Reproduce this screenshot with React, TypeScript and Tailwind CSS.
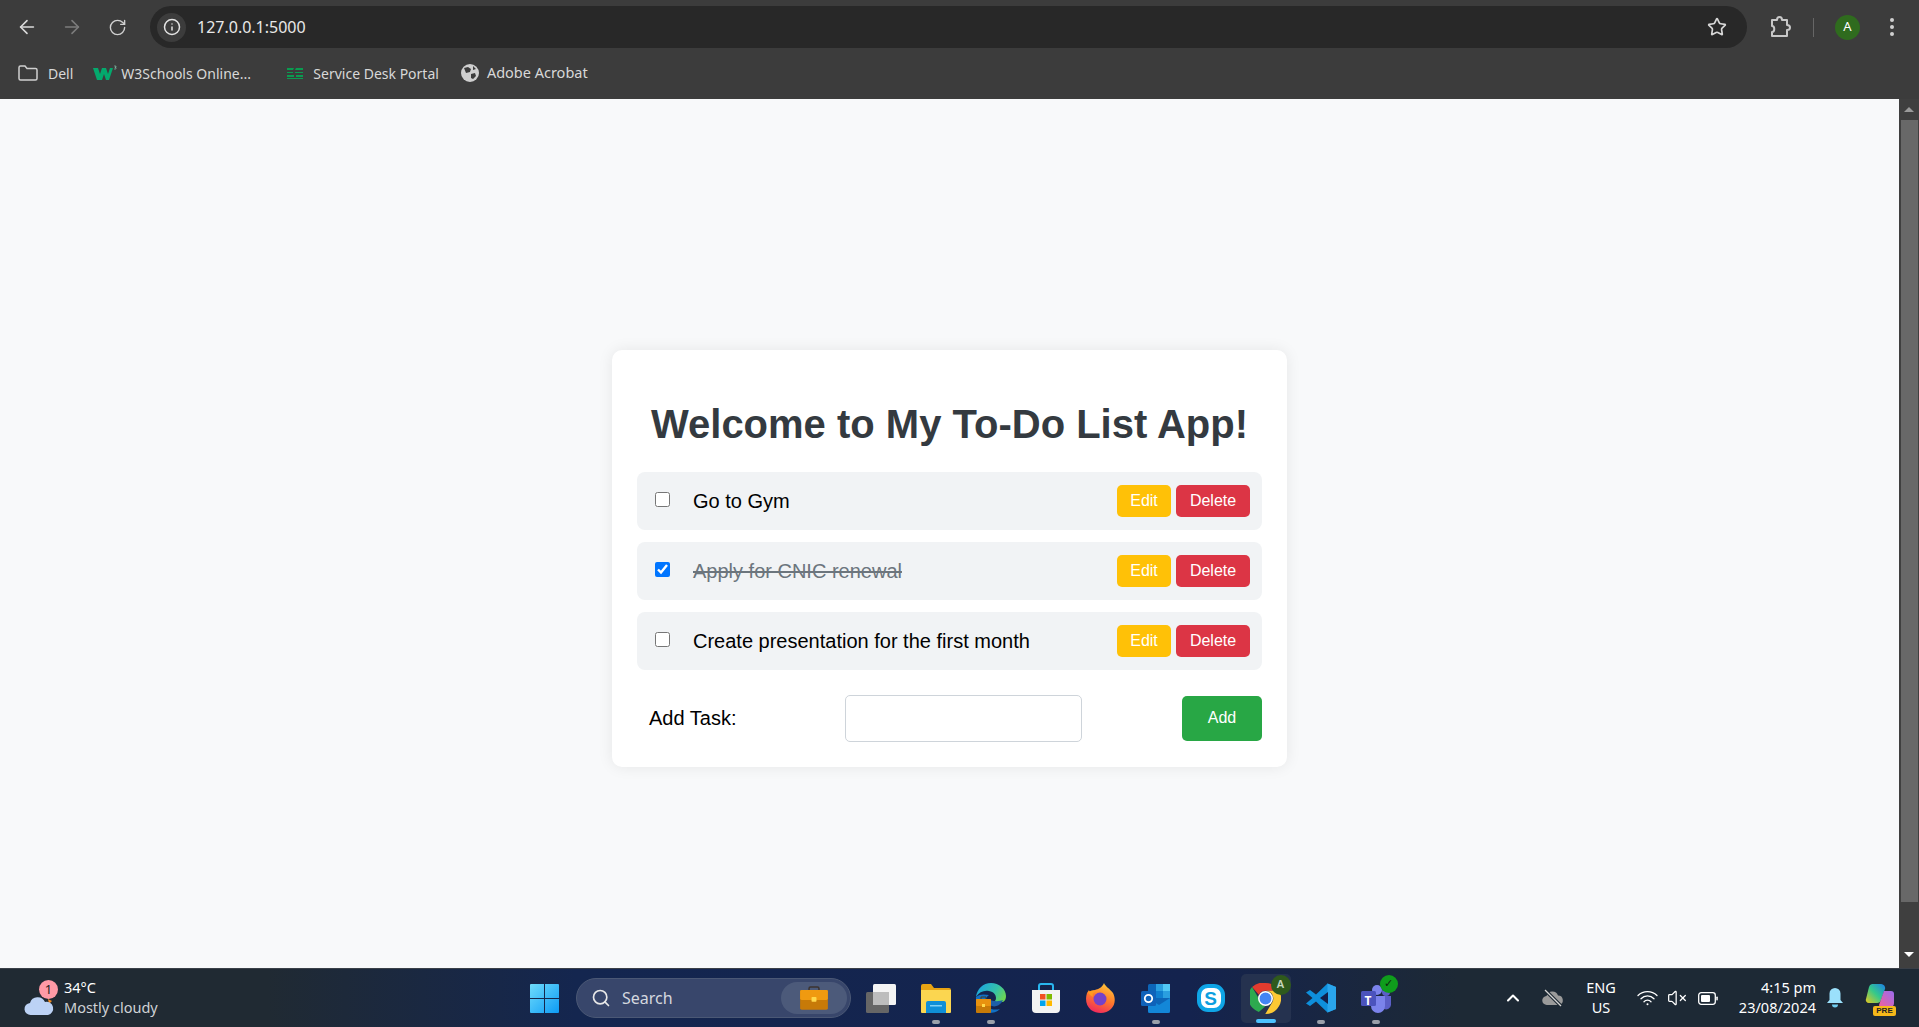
import { ArrowLeft, ArrowRight, ChevronUp, Info, RotateCw, Search, Star, VolumeX } from 'lucide-react';

const tasks = [
  { text: 'Go to Gym', done: false },
  { text: 'Apply for CNIC renewal', done: true },
  { text: 'Create presentation for the first month', done: false },
];

const WindowsLogo = () => (
  <svg width="29" height="29" viewBox="0 0 29 29">
    <defs>
      <linearGradient id="win" x1="0" y1="0" x2="1" y2="1">
        <stop offset="0" stopColor="#6fdcfb" />
        <stop offset="1" stopColor="#0d9bf5" />
      </linearGradient>
    </defs>
    <path d="M0 1a1 1 0 0 1 1-1h13v14H0zM15 0h13a1 1 0 0 1 1 1v13H15zM0 15h14v14H1a1 1 0 0 1-1-1zM15 15h14v13a1 1 0 0 1-1 1H15z" fill="url(#win)" />
  </svg>
);

const Briefcase = ({ w = 28 }: { w?: number }) => (
  <svg width={w} height={w * 0.85} viewBox="0 0 28 24">
    <path d="M9 5V2.5A1.5 1.5 0 0 1 10.500 1h7A1.500 1.500 0 0 1 19 2.500V5" fill="none" stroke="#3b3330" strokeWidth="1.500" />
    <rect x="0" y="4" width="28" height="20" rx="1.500" fill="#c77a08" />
    <rect x="0" y="4" width="28" height="10" rx="1.500" fill="#f09a10" />
    <rect x="11.500" y="11" width="5" height="5" rx="0.800" fill="#ffd84a" />
  </svg>
);

const TaskView = () => (
  <svg width="30" height="29" viewBox="0 0 30 29">
    <rect x="0" y="8" width="23" height="21" rx="1.500" fill="#666" />
    <rect x="7" y="0" width="23" height="21" rx="1.500" fill="#f4f4f4" />
    <rect x="7" y="8" width="16" height="13" fill="#bdbdbd" />
  </svg>
);

const Explorer = () => (
  <svg width="30" height="29" viewBox="0 0 30 29">
    <path d="M0 2a2 2 0 0 1 2-2h8l3 4h15a2 2 0 0 1 2 2v4H0z" fill="#e8a413" />
    <path d="M0 6h30v22a1 1 0 0 1-1 1H1a1 1 0 0 1-1-1z" fill="#fbd650" />
    <path d="M5 19a2 2 0 0 1 2-2h16a2 2 0 0 1 2 2v10H5z" fill="#0f8fd8" />
    <rect x="9" y="21" width="12" height="1.500" fill="#7fd0f5" />
  </svg>
);

const Edge = () => (
  <svg width="30" height="30" viewBox="0 0 30 30">
    <defs>
      <linearGradient id="edgeTop" x1="0" y1="0.300" x2="1" y2="0.700">
        <stop offset="0" stopColor="#1ba5e0" />
        <stop offset="0.600" stopColor="#35c1a8" />
        <stop offset="1" stopColor="#6fd650" />
      </linearGradient>
    </defs>
    <path d="M15 0C7 0 1 6 0 14c3-5 8-7 13-6 5 1 7 4 7 7 0 2-1 4-4 4h11c2-1 3-3 3-6C30 6 23 0 15 0z" fill="url(#edgeTop)" />
    <path d="M0 14c-1 8 5 16 13 16 4 0 8-1 11-4-4 1-9 1-12-2-4-4-3-9 1-12C8 11 3 11 0 14z" fill="#1170c4" />
    <path d="M14 22c4 3 9 1 12-3l1-2c-3 1-7 2-13 0z" fill="#1d5fa8" />
    <g transform="translate(0 14)">
      <rect x="0" y="2" width="15" height="14" rx="1" fill="#c77a08" />
      <rect x="0" y="2" width="15" height="7" rx="1" fill="#e8920f" />
      <rect x="6" y="7" width="3" height="3" fill="#ffd84a" />
      <path d="M5 2V0h5v2" fill="none" stroke="#4a3a20" strokeWidth="1" />
    </g>
  </svg>
);

const StoreIcon = () => (
  <svg width="30" height="30" viewBox="0 0 30 30">
    <path d="M8 7V3a2 2 0 0 1 2-2h10a2 2 0 0 1 2 2v4" fill="none" stroke="#29b6f0" strokeWidth="2" />
    <path d="M1 7h28v19a4 4 0 0 1-4 4H5a4 4 0 0 1-4-4z" fill="#f3f3f3" />
    <rect x="9" y="11" width="5.500" height="5.500" fill="#f25022" />
    <rect x="15.500" y="11" width="5.500" height="5.500" fill="#7fba00" />
    <rect x="9" y="17.500" width="5.500" height="5.500" fill="#00a4ef" />
    <rect x="15.500" y="17.500" width="5.500" height="5.500" fill="#ffb900" />
  </svg>
);

const Firefox = () => (
  <svg width="29" height="30" viewBox="0 0 29 30">
    <defs>
      <linearGradient id="ff" x1="0.700" y1="0" x2="0.300" y2="1">
        <stop offset="0" stopColor="#ffc83a" />
        <stop offset="0.500" stopColor="#ff7a2b" />
        <stop offset="1" stopColor="#f0265f" />
      </linearGradient>
    </defs>
    <path d="M18 0c1 3 6 6 9 10 3 6 2 12-2 16-5 5-14 5-20 1C0 23-1 16 1 10l2-3 1 3c1-2 3-3 5-3 3-1 7-2 9-7z" fill="url(#ff)" />
    <circle cx="14" cy="16" r="6.500" fill="#7542c9" />
    <path d="M2 9c3-2 7-2 9 0-4 0-5 2-4 5-2-1-4-3-5-5z" fill="#ff9b1f" />
  </svg>
);

const Outlook = () => (
  <svg width="29" height="29" viewBox="0 0 29 29">
    <rect x="7" y="0" width="22" height="29" rx="1.500" fill="#0c65b8" />
    <rect x="15" y="0" width="7" height="7" fill="#2a9fe0" />
    <rect x="22" y="0" width="7" height="7" fill="#52c8f5" />
    <rect x="15" y="7" width="7" height="7" fill="#0f7fd0" />
    <rect x="22" y="7" width="7" height="7" fill="#2a9fe0" />
    <path d="M7 14l11 7 11-7v13a2 2 0 0 1-2 2H9a2 2 0 0 1-2-2z" fill="#1387d8" />
    <rect x="0" y="7" width="15" height="15" rx="1.500" fill="#0f62ba" />
    <circle cx="7.500" cy="14.500" r="3.700" fill="none" stroke="#fff" strokeWidth="1.800" />
  </svg>
);

const Skype = () => (
  <div className="relative flex h-[28px] w-[28px] items-center justify-center rounded-[11px] border-[4px] border-[#0fa5e6] bg-white">
    <span className="font-['Liberation_Sans',sans-serif] text-[19px] leading-none font-bold text-[#0d9fdf]">S</span>
  </div>
);

const ChromeIcon = () => (
  <svg width="31" height="31" viewBox="0 0 30 30">
    <path d="M15 0a15 15 0 0 1 13 7.500H15a7.500 7.500 0 0 0-6.500 3.750L2 3.900A15 15 0 0 1 15 0z" fill="#e33b2e" />
    <path d="M2 3.900l6.500 11.100a7.500 7.500 0 0 0 6.500 7.500L8.500 28A15 15 0 0 1 2 3.900z" fill="#2da94f" />
    <path d="M28 7.500A15 15 0 0 1 15 30l-0.200 0 6.700-11.250A7.500 7.500 0 0 0 15 7.500z" fill="#fcc934" />
    <circle cx="15" cy="15" r="6.500" fill="#4285f4" stroke="#fff" strokeWidth="1.500" />
  </svg>
);

const VSCode = () => (
  <svg width="30" height="30" viewBox="0 0 30 30">
    <path d="M21.500 0.500L30 4v22l-8.500 3.500L10 18.500l-6 4.500-4-2.500 6.500-5.500L0 9.500 4 7l6 4.500z" fill="#0e8fdc" />
    <path d="M21.500 0.500L30 4v22l-8.500 3.500z" fill="#2aa5ec" />
    <path d="M22 9l-8 6 8 6z" fill="#131f4a" />
  </svg>
);

const Teams = () => (
  <svg width="30" height="30" viewBox="0 0 30 30">
    <circle cx="25" cy="9" r="4" fill="#5b5fc7" />
    <circle cx="16" cy="7" r="5" fill="#7b83eb" />
    <path d="M20 13h10v9a5 5 0 0 1-7 4z" fill="#5b5fc7" />
    <path d="M8 13h16v10a7 7 0 0 1-14 0z" fill="#7b83eb" />
    <rect x="0" y="8" width="15" height="15" rx="1.500" fill="#4b53bc" />
  </svg>
);

const CloudOff = () => (
  <svg width="22" height="18" viewBox="0 0 22 18">
    <path d="M5 16a4.500 4.500 0 0 1-.5-9A6 6 0 0 1 16 6.500a4.800 4.800 0 0 1 1 9.500z" fill="#9a9a9a" />
    <path d="M3 1l16 16" stroke="#1d2833" strokeWidth="3.500" />
    <path d="M3 1l16 16" stroke="#d5d5d5" strokeWidth="1.200" />
  </svg>
);

const Wifi = () => (
  <svg width="21" height="16" viewBox="0 0 21 16" fill="none" stroke="#fff" strokeWidth="1.300" strokeLinecap="round">
    <path d="M1 5.500a13.500 13.500 0 0 1 19 0" />
    <path d="M4 8.700a9 9 0 0 1 13 0" />
    <path d="M7 11.700a4.800 4.800 0 0 1 7 0" />
    <circle cx="10.500" cy="14.300" r="1" fill="#fff" stroke="none" />
  </svg>
);

const Battery = () => (
  <svg width="20" height="13" viewBox="0 0 20 13">
    <rect x="0.700" y="0.700" width="16.600" height="11.600" rx="2.500" fill="none" stroke="#fff" strokeWidth="1.300" />
    <rect x="3" y="3" width="9" height="7" rx="1" fill="#fff" />
    <rect x="18.300" y="4.500" width="1.500" height="4" rx="0.700" fill="#fff" />
  </svg>
);

const Copilot = () => (
  <svg width="30" height="26" viewBox="0 0 30 26">
    <defs>
      <linearGradient id="copA" x1="0" y1="1" x2="1" y2="0">
        <stop offset="0" stopColor="#e8c81e" />
        <stop offset="0.500" stopColor="#35c98a" />
        <stop offset="1" stopColor="#1b7fe8" />
      </linearGradient>
      <linearGradient id="copB" x1="1" y1="0" x2="0" y2="1">
        <stop offset="0" stopColor="#9a6cf0" />
        <stop offset="1" stopColor="#f0609a" />
      </linearGradient>
    </defs>
    <path d="M7 1h9a4 4 0 0 1 4 5l-4 11a4 4 0 0 1-4 3H4a3 3 0 0 1-3-4L4 4a4 4 0 0 1 3-3z" fill="url(#copA)" />
    <path d="M19 8h7a3 3 0 0 1 3 3v9a4 4 0 0 1-4 4H15a3 3 0 0 1-1-2z" fill="url(#copB)" />
  </svg>
);

const Dock = ({ children, dot, active }: { children: React.ReactNode; dot?: boolean; active?: boolean }) => (
  <div className="flex h-[59px] w-[55px] items-center justify-center">
    <div className={`relative flex h-[49px] w-[50px] items-center justify-center rounded-[5px] ${active ? 'bg-[#25324f]' : ''}`}>
      {children}
      {dot && <span className="absolute bottom-[-1px] left-[21px] h-[4px] w-[8px] rounded-full bg-[#9aa0aa]" />}
      {active && <span className="absolute bottom-[0px] left-[15px] h-[4px] w-[20px] rounded-full bg-[#4cc2ff]" />}
    </div>
  </div>
);

function Browser() {
  return (
    <div className="h-[99px] shrink-0 bg-[#3c3c3c] font-['Noto_Sans',sans-serif] text-[#e3e3e3]">
      <div className="flex h-[54px] items-center">
        <div className="flex w-[150px] items-center pl-[16px]">
          <ArrowLeft size={22} strokeWidth={1.750} className="text-[#dadada]" />
          <ArrowRight size={22} strokeWidth={1.750} className="ml-[23px] text-[#7c7c7c]" />
          <RotateCw size={19} strokeWidth={1.750} className="ml-[25px] text-[#d0d0d0]" />
        </div>
        <div className="flex h-[42px] w-[1597px] items-center rounded-full bg-[#282828] pr-[20px] pl-[7px]">
          <div className="flex h-[29px] w-[29px] items-center justify-center rounded-full bg-[#3c3c3c]">
            <Info size={18} strokeWidth={2} className="text-[#e3e3e3]" />
          </div>
          <span className="ml-[11px] text-[16px] text-[#e8e8e8]">127.0.0.1:5000</span>
          <Star size={20} strokeWidth={2} className="ml-auto text-[#d8d8d8]" />
        </div>
        <svg width="20" height="22" viewBox="0 0 20 22" fill="none" stroke="#c8c8c8" strokeWidth="2" className="ml-[24px]">
          <path d="M1 4h5c0-4 5-4 5 0h5v5c4 0 4 5 0 5v6H1v-4c3 0 3-6 0-6z" strokeLinejoin="round" />
        </svg>
        <span className="ml-[22px] h-[19px] w-[1px] bg-[#666]" />
        <div className="ml-[21px] flex h-[25px] w-[25px] items-center justify-center rounded-full bg-[#2f6b1e] text-[13px] text-white">A</div>
        <div className="ml-[30px] flex flex-col gap-[3px]">
          <span className="h-[4px] w-[4px] rounded-full bg-[#d0d0d0]" />
          <span className="h-[4px] w-[4px] rounded-full bg-[#d0d0d0]" />
          <span className="h-[4px] w-[4px] rounded-full bg-[#d0d0d0]" />
        </div>
      </div>
      <div className="flex h-[38px] items-center text-[14px] text-[#d8d8d8]">
        <svg width="20" height="16" viewBox="0 0 20 16" fill="none" stroke="#cfcfcf" strokeWidth="1.500" className="ml-[18px]">
          <path d="M1 2.500A1.500 1.500 0 0 1 2.500 1H7l2 2.500h8.500A1.500 1.500 0 0 1 19 5v8.500a1.500 1.500 0 0 1-1.500 1.500h-15A1.500 1.500 0 0 1 1 13.500z" />
        </svg>
        <span className="ml-[10px]">Dell</span>
        <svg width="24" height="16" viewBox="0 0 24 16" className="ml-[20px]">
          <path d="M0 3h5l2 6 2-6h4l2 6 2-6h3l-4 12h-3l-2-6-2 6H4z" fill="#04a96d" />
          <path d="M21 1h2v1h-1v.5h1V4h-2" fill="none" stroke="#9adfc4" strokeWidth="0.500" />
        </svg>
        <span className="ml-[4px] w-[131px]">W3Schools Online...</span>
        <svg width="16" height="13" viewBox="0 0 16 13" className="ml-[35px]">
          <path d="M0 1h7L6 3H0zM9 1h7v2H8zM0 5h6v1H0zM8 5h8v1H8zM0 8h7v2H0zM9 8h7v2H9zM0 11h16v1H0z" fill="#0a9b50" />
        </svg>
        <span className="ml-[10px]">Service Desk Portal</span>
        <svg width="18" height="18" viewBox="0 0 18 18" className="ml-[22px]">
          <circle cx="9" cy="9" r="9" fill="#cfcfcf" />
          <path d="M3 4l4-1 3 2-1 3-4 1zM10 10l4-1 1 3-3 3-2-1zM12 2l3 3-3 1z" fill="#3c3c3c" />
        </svg>
        <span className="ml-[8px] text-[14.500px]">Adobe Acrobat</span>
      </div>
    </div>
  );
}

function TodoCard() {
  return (
    <div className="w-[675px] rounded-[10px] bg-white px-[25px] pt-[50px] pb-[25px] font-['Liberation_Sans',sans-serif] shadow-[0_0_15px_rgba(0,0,0,0.08)]">
      <h1 className="mb-[24px] text-center text-[40px] leading-[48px] font-bold text-[#343a40]">Welcome to My To-Do List App!</h1>
      <div className="flex flex-col gap-[12px]">
        {tasks.map((task) => (
          <div key={task.text} className="flex h-[58px] items-center rounded-[8px] bg-[#f1f3f5] pr-[12px] pl-[18px]">
            <input type="checkbox" defaultChecked={task.done} className="mb-[3px] h-[15px] w-[15px] accent-[#0075ff]" />
            <span className={`ml-[23px] text-[20px] ${task.done ? 'text-[#6c757d] line-through' : 'text-black'}`}>{task.text}</span>
            <button className="ml-auto h-[32px] w-[54px] rounded-[5px] bg-[#ffc107] pb-[1px] text-[16px] text-white">Edit</button>
            <button className="ml-[5px] h-[32px] w-[74px] rounded-[5px] bg-[#dc3545] pb-[1px] text-[16px] text-white">Delete</button>
          </div>
        ))}
      </div>
      <div className="mt-[25px] flex items-center">
        <label className="mb-[2px] ml-[12px] w-[196px] text-[20px] text-black">Add Task:</label>
        <input type="text" className="h-[47px] w-[237px] rounded-[5px] border border-[#ced4da] bg-white" />
        <button className="ml-auto h-[45px] w-[80px] rounded-[5px] bg-[#28a745] pb-[2px] text-[16px] text-white">Add</button>
      </div>
    </div>
  );
}

function Scrollbar() {
  return (
    <div className="flex w-[20px] shrink-0 flex-col items-center bg-[#3f3f3f]">
      <span className="mt-[8px] h-0 w-0 border-x-[5px] border-b-[5px] border-x-transparent border-b-[#9a9a9a]" />
      <div className="mt-[8px] h-[782px] w-[17px] bg-[#686868]" />
      <span className="mt-[50px] h-0 w-0 border-x-[5px] border-t-[5px] border-x-transparent border-t-white" />
    </div>
  );
}

function Taskbar() {
  return (
    <div className="flex h-[59px] shrink-0 items-center border-t border-[#3a4048] bg-[linear-gradient(90deg,#202a33_0%,#202a33_14%,#14264f_30%,#14234e_62%,#1d2935_76%,#1d2935_100%)] font-['Noto_Sans',sans-serif] text-white">
      <div className="flex w-[530px] shrink-0 items-center pl-[24px]">
        <div className="relative h-[34px] w-[31px] pt-[14px]">
          <svg width="31" height="21" viewBox="0 0 31 21">
            <path d="M24 4l4 2-3 3z" fill="#f28a1e" />
            <path d="M7 20a6 6 0 0 1-1-12 8 8 0 0 1 15-1 6.500 6.500 0 0 1 3 13z" fill="#bcd2f5" />
          </svg>
          <span className="absolute top-[-1px] left-[15px] flex h-[19px] w-[19px] items-center justify-center rounded-full bg-[#ff9aa6] text-[13px] text-[#222]">1</span>
        </div>
        <div className="mb-[2px] ml-[9px] flex flex-col">
          <span className="text-[14.500px] leading-[20px]">34°C</span>
          <span className="text-[14.500px] leading-[20px] text-[#cfd2d6]">Mostly cloudy</span>
        </div>
      </div>
      <WindowsLogo />
      <div className="ml-[17px] flex h-[40px] w-[275px] items-center rounded-full border border-[#4b5875] bg-[#38466b] pr-[3px] pl-[14px]">
        <Search size={20} strokeWidth={2} className="text-[#e8e8e8]" />
        <span className="ml-[11px] text-[16px] text-[#d4d8df]">Search</span>
        <div className="ml-auto flex h-[32px] w-[66px] items-center justify-center rounded-full bg-[#4c5a7a]">
          <Briefcase />
        </div>
      </div>
      <div className="ml-[2px] flex">
        <Dock><TaskView /></Dock>
        <Dock dot><Explorer /></Dock>
        <Dock dot><Edge /></Dock>
        <Dock><StoreIcon /></Dock>
        <Dock><Firefox /></Dock>
        <Dock dot><Outlook /></Dock>
        <Dock><Skype /></Dock>
        <Dock active>
          <ChromeIcon />
          <span className="absolute top-[1px] right-[0px] flex h-[20px] w-[20px] items-center justify-center rounded-full bg-[#2f5a1c] text-[11px] font-semibold text-[#c8d8c0]">A</span>
        </Dock>
        <Dock dot><VSCode /></Dock>
        <Dock dot>
          <Teams />
          <span className="absolute top-[21px] left-[14px] text-[12px] leading-none font-bold text-white">T</span>
          <span className="absolute top-[1px] right-[3px] flex h-[18px] w-[18px] items-center justify-center rounded-full bg-[#0f9d1c] text-[11px] text-[#10240e]">✓</span>
        </Dock>
      </div>
      <ChevronUp size={20} strokeWidth={2.500} className="ml-[100px] text-white" />
      <div className="ml-[19px]"><CloudOff /></div>
      <div className="mb-[2px] ml-[15px] flex w-[44px] flex-col items-center text-[14.500px] leading-[20px]">
        <span>ENG</span>
        <span>US</span>
      </div>
      <div className="ml-[14px]"><Wifi /></div>
      <VolumeX size={20} strokeWidth={1.500} className="ml-[9px] text-white" />
      <div className="ml-[11px]"><Battery /></div>
      <div className="mb-[2px] flex w-[98px] flex-col items-end text-[14.500px] leading-[20px]">
        <span>4:15 pm</span>
        <span>23/08/2024</span>
      </div>
      <svg width="16" height="20" viewBox="0 0 16 20" className="ml-[11px]">
        <path d="M8 0a5.500 5.500 0 0 1 5.500 5.500V12l2.500 3H0l2.500-3V5.500A5.500 5.500 0 0 1 8 0z" fill="#9be0fb" />
        <path d="M5 16.500h6a3 3 0 0 1-6 0z" fill="#6fcdf0" />
      </svg>
      <div className="relative ml-[22px] h-[30px] w-[30px]">
        <Copilot />
        <span className="absolute right-[-1px] bottom-[-3px] flex h-[10px] w-[23px] items-center justify-center rounded-[2px] bg-[#f6b81a] font-['Liberation_Sans',sans-serif] text-[8px] leading-none font-bold text-[#222]">PRE</span>
      </div>
    </div>
  );
}

export default function App() {
  return (
    <div className="flex h-screen w-full flex-col overflow-hidden">
      <Browser />
      <div className="flex min-h-0 flex-1">
        <main className="flex flex-1 items-start justify-center bg-[#f8f9fa] pt-[251px]">
          <TodoCard />
        </main>
        <Scrollbar />
      </div>
      <Taskbar />
    </div>
  );
}
